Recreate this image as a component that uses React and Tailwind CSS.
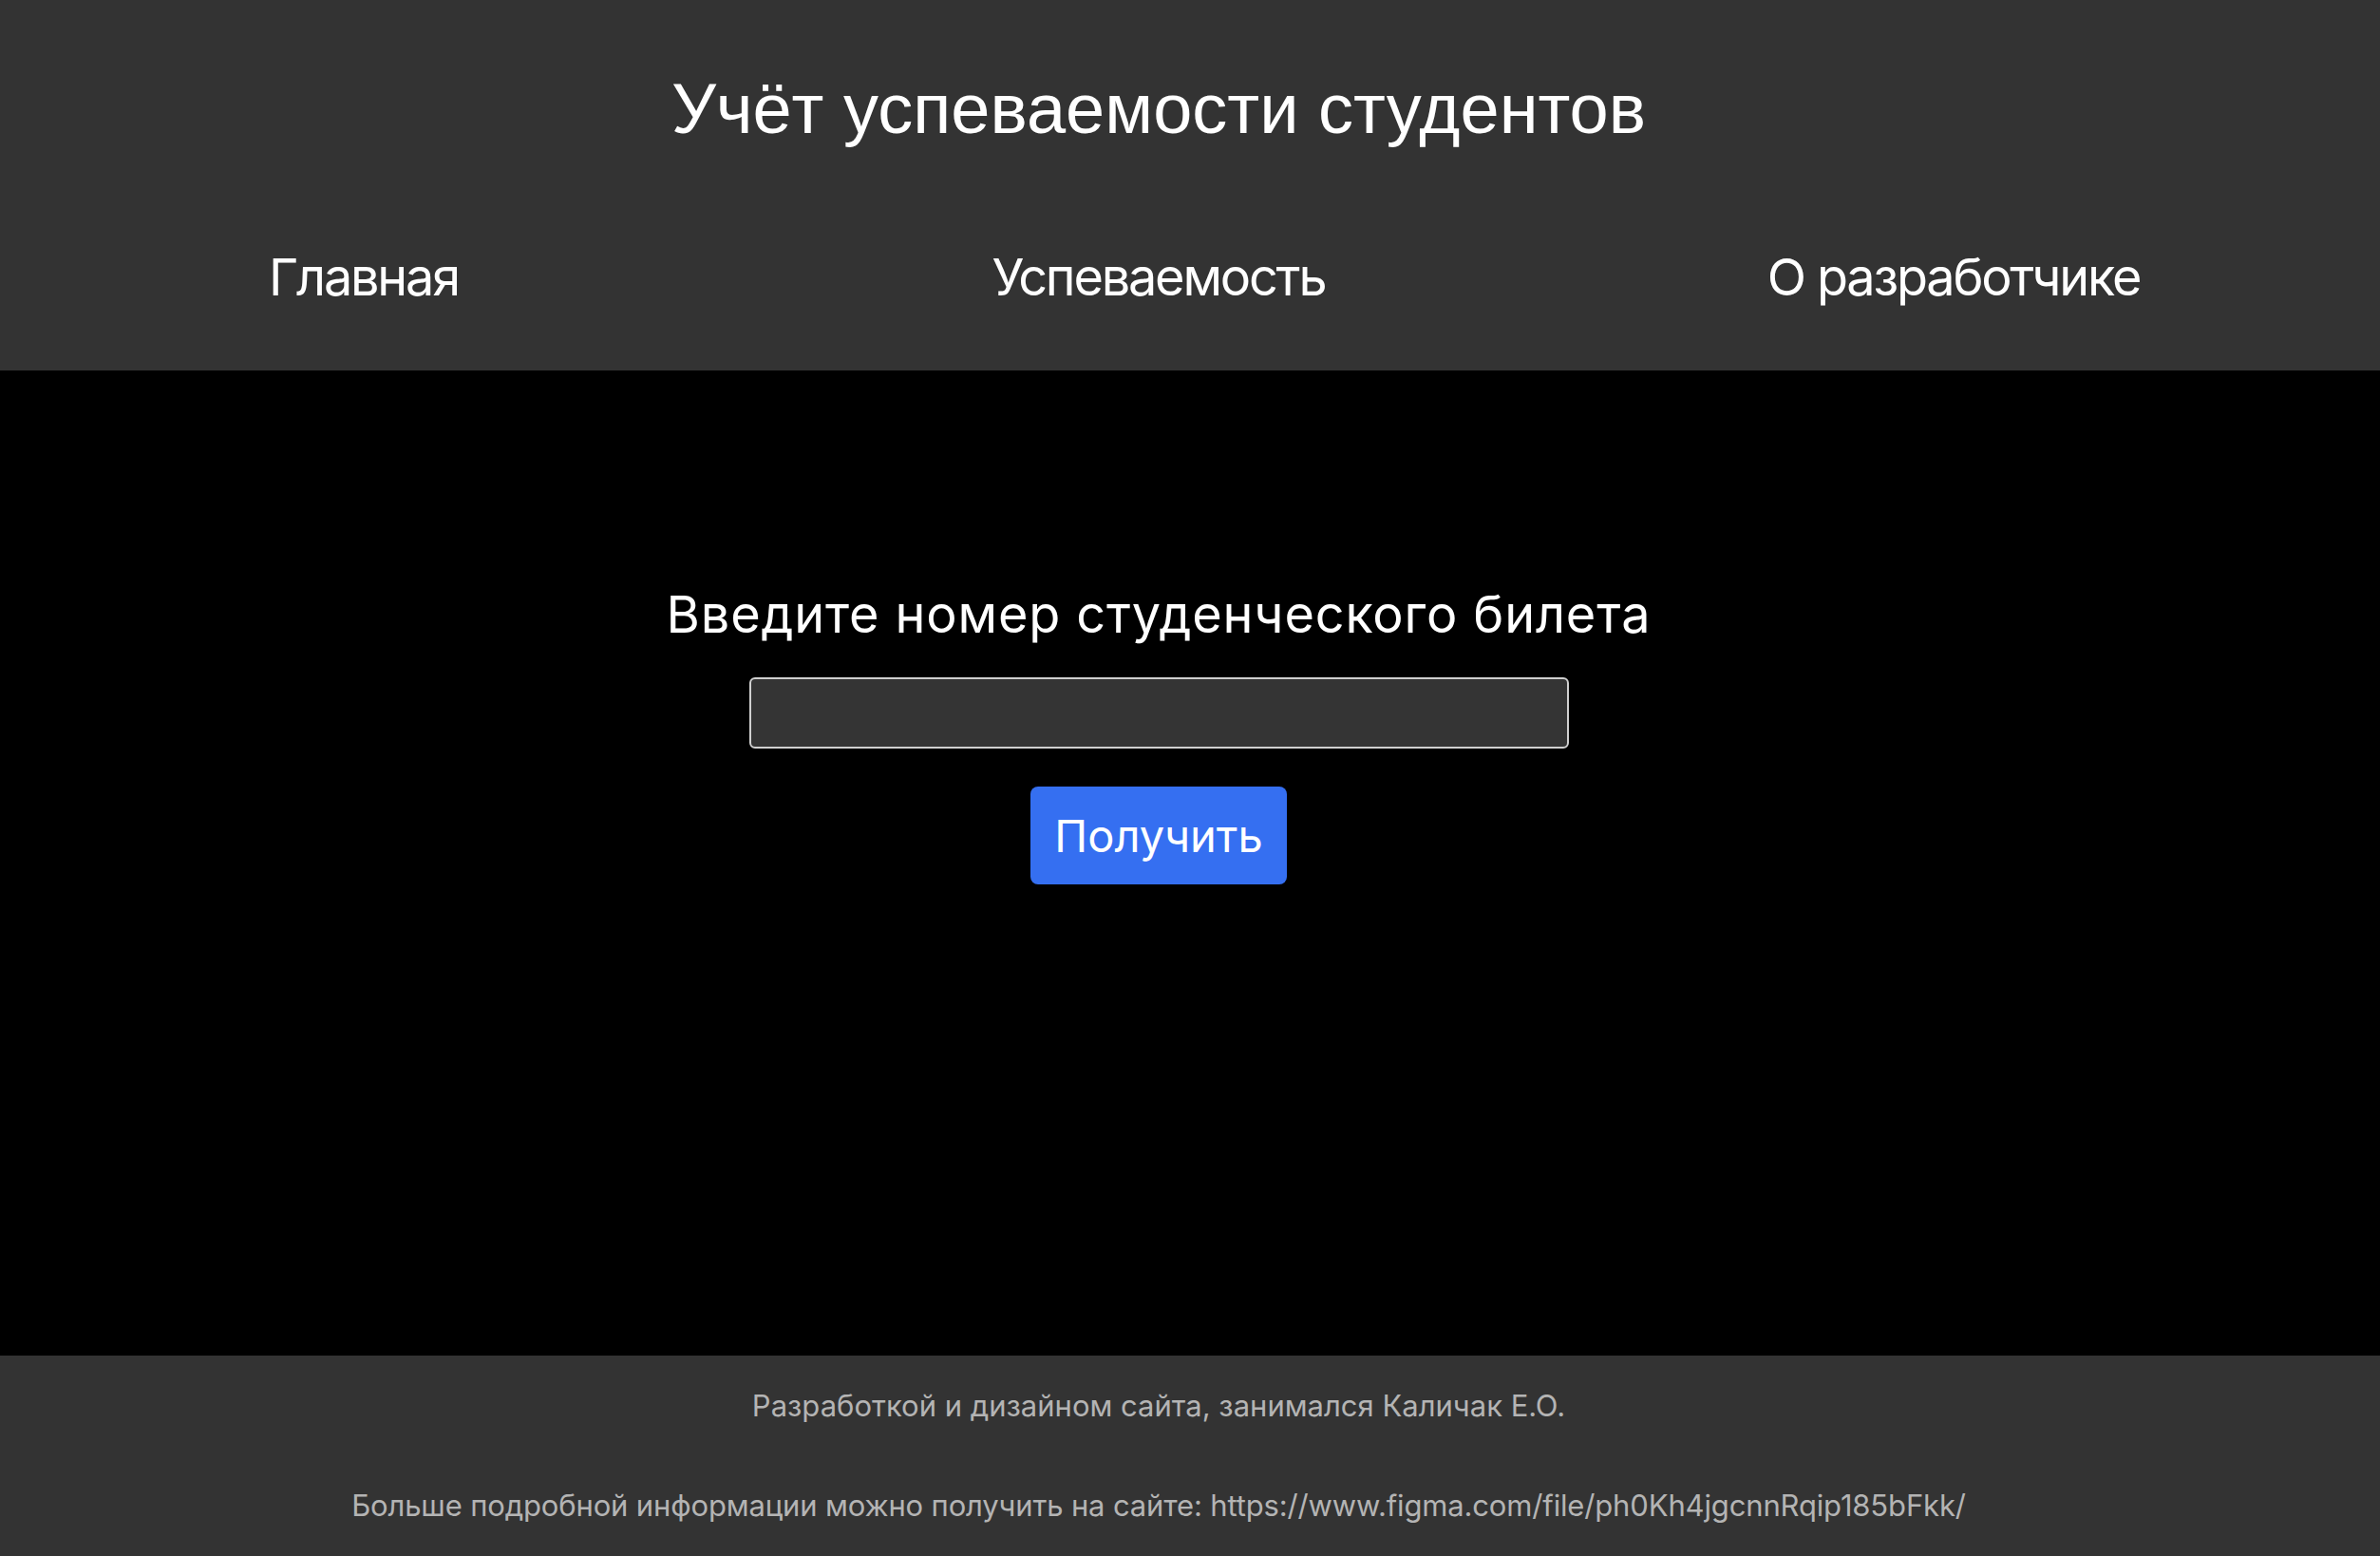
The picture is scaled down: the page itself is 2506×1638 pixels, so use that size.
const links = ["Главная", "Успеваемость", "О разработчике"];

const App = () => {
    return (
        <div className="min-h-screen bg-black text-white font-['Inter','Noto_Sans',sans-serif]">
            <header className="bg-[#333333] pt-[78px] pb-[71px]">
                <div className="w-[2440px] flex flex-col items-center">
                    <h1 className="font-['Liberation_Sans',Arial,sans-serif] text-[74px] leading-none font-normal">Учёт успеваемости студентов</h1>
                    <nav className="mt-[113px] flex justify-center">
                        {links.map((link, index) => (
                            <a key={index} href="#" className="w-[837px] text-center text-[54px] leading-none tracking-[-2.2px]">
                                {link}
                            </a>
                        ))}
                    </nav>
                </div>
            </header>

            <main className="h-[1037px] pt-[230px]">
                <div className="w-[2440px] flex flex-col items-center">
                    <h2 className="text-[54px] leading-none font-normal tracking-[0.85px]">Введите номер студенческого билета</h2>
                    <input
                        type="text"
                        className="mt-[39px] w-[863px] h-[75px] bg-[#343434] border-2 border-[#cfcfcf] rounded-[6px] px-4 text-[40px] outline-none"
                    />
                    <button className="mt-[40px] w-[270px] h-[103px] bg-[#356ff1] rounded-[8px] text-[47px] leading-none">
                        Получить
                    </button>
                </div>
            </main>

            <footer className="bg-[#333333] pt-[37px] pb-[38px] text-[#b4b4b4]">
                <div className="w-[2440px] flex flex-col items-center text-[31px] leading-none">
                    <p>Разработкой и дизайном сайта, занимался Каличак Е.О.</p>
                    <p className="mt-[74px] tracking-[-0.15px]">Больше подробной информации можно получить на сайте: https://www.figma.com/file/ph0Kh4jgcnnRqip185bFkk/</p>
                </div>
            </footer>
        </div>
    );
};

export default App;
